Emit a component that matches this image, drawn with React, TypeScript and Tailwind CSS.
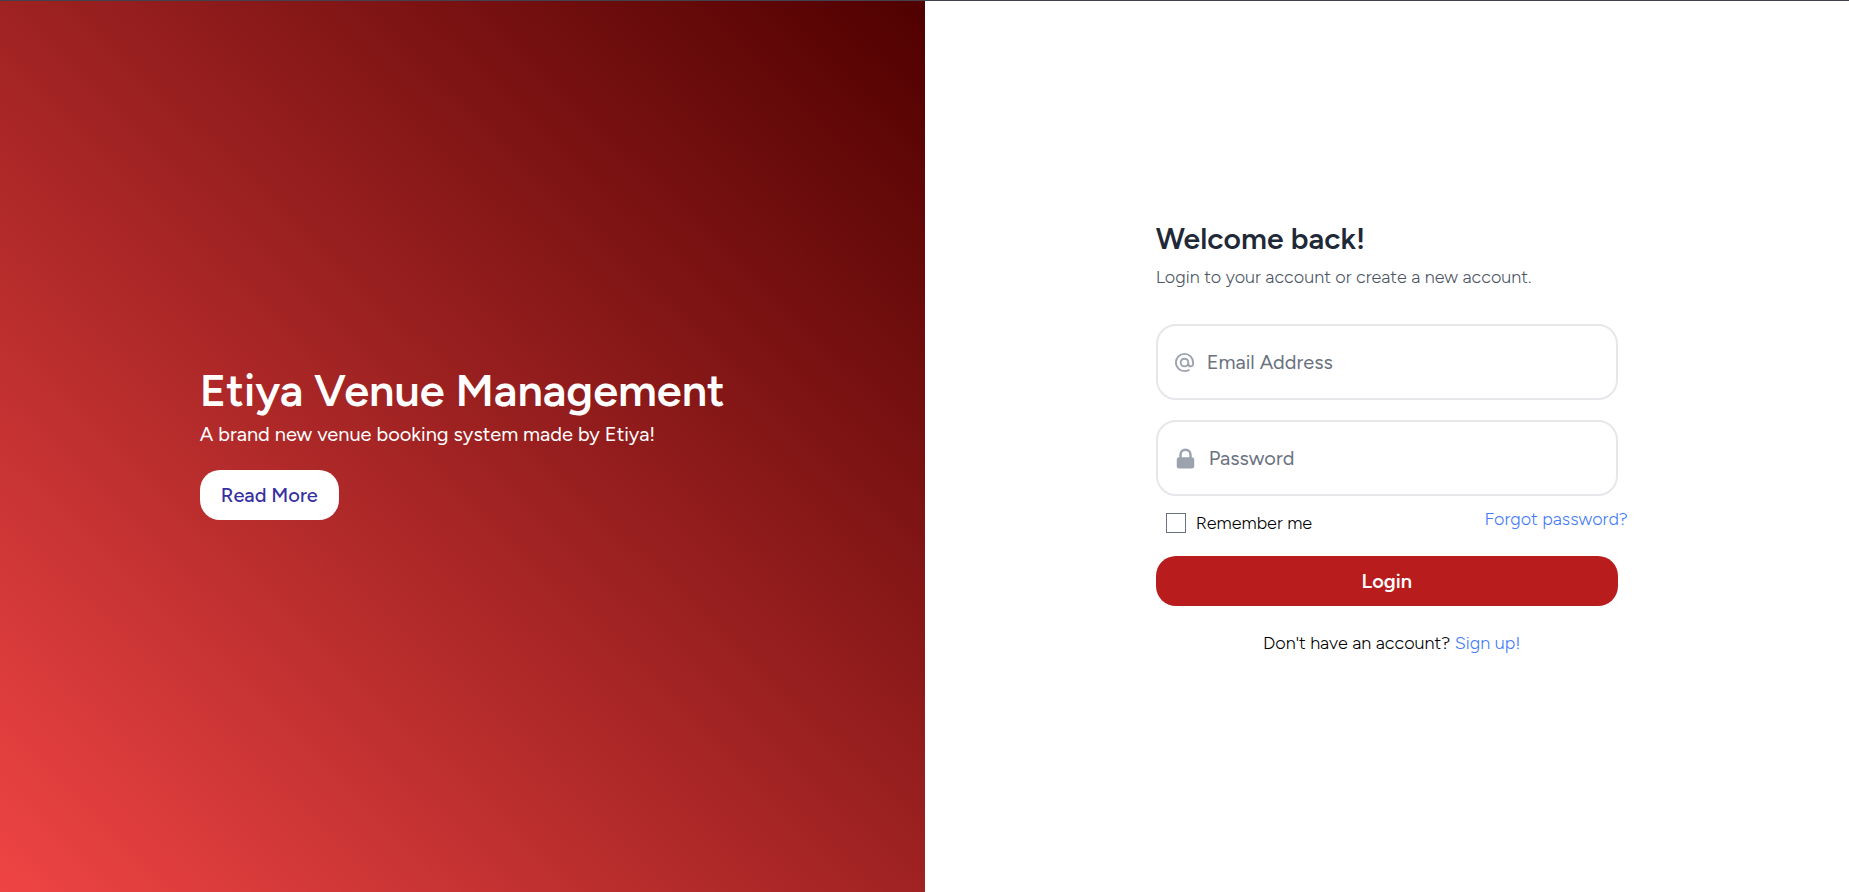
import { useState, type FormEvent } from "react";

function AtIcon() {
  return (
    <svg className="size-[23px] shrink-0 text-[#9ca3af]" fill="none" viewBox="0 0 24 24" stroke="currentColor" strokeWidth="2" strokeLinecap="round" strokeLinejoin="round" aria-hidden="true">
      <path d="M16 12a4 4 0 10-8 0 4 4 0 008 0zm0 0v1.5a2.5 2.5 0 005 0V12a9 9 0 10-9 9m4.5-1.206a8.959 8.959 0 01-4.5 1.207" />
    </svg>
  );
}

function LockIcon() {
  return (
    <svg className="size-[25px] shrink-0 text-[#9ca3af]" viewBox="0 0 20 20" fill="currentColor" aria-hidden="true">
      <path fillRule="evenodd" clipRule="evenodd" d="M5 9V7a5 5 0 0110 0v2a2 2 0 012 2v5a2 2 0 01-2 2H5a2 2 0 01-2-2v-5a2 2 0 012-2zm8-2v2H7V7a3 3 0 016 0z" />
    </svg>
  );
}

export default function App() {
  const [email, setEmail] = useState("");
  const [password, setPassword] = useState("");
  const [remember, setRemember] = useState(false);
  const submit = (event: FormEvent) => event.preventDefault();

  return (
    <main className="flex min-h-screen border-t border-[#42414d] bg-white font-['Figtree','Lato',sans-serif]">
      <section className="flex w-1/2 items-center justify-center bg-[linear-gradient(to_top_right,#ef4444,#500000)]">
        <div className="pb-2">
          <h1 className="text-[45px] leading-[50px] font-semibold text-white">Etiya Venue Management</h1>
          <p className="mt-0.5 text-[20px] leading-[35px] text-white">A brand new venue booking system made by Etiya!</p>
          <button type="button" className="mt-[18px] h-[50px] rounded-[20px] bg-white px-[21px] text-[20px] font-medium text-[#3730a3]">
            Read More
          </button>
        </div>
      </section>

      <section className="flex w-1/2 items-center justify-center">
        <form className="w-1/2 pb-[14px]" onSubmit={submit}>
          <h2 className="text-[30px] leading-[35px] font-semibold text-[#1f2937]">Welcome back!</h2>
          <p className="mt-1.5 mb-8 text-[18px] leading-[30px] font-light text-[#4b5563]">Login to your account or create a new account.</p>

          <div className="mb-5 flex h-[76px] items-center gap-[11px] rounded-[20px] border-2 border-[#e5e7eb] px-[15px]">
            <AtIcon />
            <input type="email" aria-label="Email Address" placeholder="Email Address" value={email} onChange={(e) => setEmail(e.target.value)} className="min-w-0 flex-1 text-[20px] outline-none placeholder:text-[#6b7280]" />
          </div>
          <div className="flex h-[76px] items-center gap-[11px] rounded-[20px] border-2 border-[#e5e7eb] px-[15px]">
            <LockIcon />
            <input type="password" aria-label="Password" placeholder="Password" value={password} onChange={(e) => setPassword(e.target.value)} className="min-w-0 flex-1 text-[20px] outline-none placeholder:text-[#6b7280]" />
          </div>

          <div className="-mr-[10px] ml-[10px] flex items-start justify-between pt-3 font-light">
            <label className="flex items-center gap-[10px] pt-1 text-[18px] leading-[22px] text-black">
              <input type="checkbox" checked={remember} onChange={(e) => setRemember(e.target.checked)} className="size-5 appearance-none border border-[#6b7280] bg-white checked:bg-blue-600" />
              Remember me
            </label>
            <a href="#forgot" className="text-[18px] leading-[22px] text-[#437cf6]">Forgot password?</a>
          </div>

          <button type="submit" className="mt-[22px] h-[50px] w-full rounded-[20px] bg-[#b91c1c] text-[20px] font-semibold text-white">
            Login
          </button>
          <p className="mt-[22px] pl-[10px] text-center text-[18px] leading-[30px] font-light text-black">
            Don't have an account? <a href="#signup" className="text-[#437cf6]">Sign up!</a>
          </p>
        </form>
      </section>
    </main>
  );
}
